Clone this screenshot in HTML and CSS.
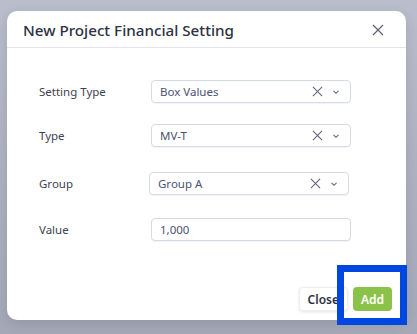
FILE: index.html
```html
<!DOCTYPE html>
<html lang="en">
<head>
    <meta charset="UTF-8">
    <meta name="viewport" content="width=device-width, initial-scale=1.0">
    <title>New Project Financial Setting</title>
    <link rel="stylesheet" href="styles.css">
</head>
<body>
    <div class="modal">
        <div class="modal-header">
            <h2 class="modal-title">New Project Financial Setting</h2>
            <span class="close">
                <svg width="12" height="12" viewBox="0 0 12 12"><path d="M1 1L11 11M11 1L1 11" stroke="#5b6070" stroke-width="1.2" fill="none"/></svg>
            </span>
        </div>

        <div class="modal-body">
            <div class="form-row">
                <label>Setting Type</label>
                <div class="select">
                    <span class="select-value">Box Values</span>
                    <svg class="clear" width="12" height="12" viewBox="0 0 12 12"><path d="M1 1L11 11M11 1L1 11" stroke="#5b6278" stroke-width="1.1" fill="none"/></svg>
                    <svg class="chevron" width="8" height="6" viewBox="0 0 8 6"><path d="M1.5 1.8L4 4.3L6.5 1.8" stroke="#5b6278" stroke-width="1.1" fill="none"/></svg>
                </div>
            </div>
            <div class="form-row">
                <label>Type</label>
                <div class="select">
                    <span class="select-value">MV-T</span>
                    <svg class="clear" width="12" height="12" viewBox="0 0 12 12"><path d="M1 1L11 11M11 1L1 11" stroke="#5b6278" stroke-width="1.1" fill="none"/></svg>
                    <svg class="chevron" width="8" height="6" viewBox="0 0 8 6"><path d="M1.5 1.8L4 4.3L6.5 1.8" stroke="#5b6278" stroke-width="1.1" fill="none"/></svg>
                </div>
            </div>
            <div class="form-row form-row-group">
                <label>Group</label>
                <div class="select">
                    <span class="select-value">Group A</span>
                    <svg class="clear" width="12" height="12" viewBox="0 0 12 12"><path d="M1 1L11 11M11 1L1 11" stroke="#5b6278" stroke-width="1.1" fill="none"/></svg>
                    <svg class="chevron" width="8" height="6" viewBox="0 0 8 6"><path d="M1.5 1.8L4 4.3L6.5 1.8" stroke="#5b6278" stroke-width="1.1" fill="none"/></svg>
                </div>
            </div>
            <div class="form-row form-row-value">
                <label>Value</label>
                <input class="text-input" value="1,000">
            </div>
        </div>

        <div class="modal-footer">
            <button class="btn btn-close">Close</button>
            <button class="btn btn-add">Add</button>
        </div>
    </div>

    <div class="highlight"></div>
</body>
</html>
```

FILE: styles.css
```css
body {
    font-family: "Noto Sans", "Open Sans", Arial, sans-serif;
    margin: 0;
    padding: 11px 11px 0 7px;
    background: linear-gradient(to bottom, #babdcb, #a4a8b7);
    min-height: 334px;
    box-sizing: border-box;
    position: relative;
    overflow: hidden;
}
.modal {
    background-color: white;
    border-radius: 10px;
    box-shadow: 0 4px 12px rgba(40, 45, 70, 0.15);
    width: 399px;
    height: 309px;
    display: flex;
    flex-direction: column;
}
.modal-header {
    display: flex;
    justify-content: space-between;
    align-items: center;
    height: 36px;
    padding: 0 22px 0 16px;
    border-bottom: 1px solid #e3e4ef;
}
.modal-title {
    font-size: 15.2px;
    font-weight: 500;
    color: #2d3142;
    margin: 0;
    padding-top: 2px;
}
.close {
    display: flex;
    cursor: pointer;
    padding-top: 1px;
}
.modal-body {
    flex-grow: 1;
    padding: 32px 0 0 32px;
    display: flex;
    flex-direction: column;
    gap: 21px;
}
.form-row {
    display: flex;
    align-items: center;
}
.form-row label {
    width: 112px;
    font-size: 11.5px;
    color: #3e4250;
}
.form-row-group {
    margin-top: 4px;
}
.form-row-group label {
    width: 110px;
}
.form-row-value {
    margin-top: 2px;
}
.select,
.text-input {
    width: 200px;
    height: 23px;
    box-sizing: border-box;
    border: 1px solid #d6d9e6;
    border-radius: 4px;
    display: flex;
    align-items: center;
    padding: 0 8px;
    font-family: inherit;
    font-size: 11.5px;
    color: #4a5273;
    box-shadow: 0 1px 1px rgba(60, 70, 110, 0.06);
}
.select-value {
    flex-grow: 1;
}
.select .clear {
    width: 11px;
    height: 11px;
    margin-right: 9px;
}
.select .chevron {
    margin-right: 2px;
}
.text-input {
    outline: none;
}
.modal-footer {
    display: flex;
    justify-content: flex-end;
    gap: 5px;
    padding: 0 14px 9px 0;
}
.btn {
    font-family: inherit;
    height: 24px;
    border-radius: 4px;
    font-size: 12px;
    font-weight: 600;
    cursor: pointer;
    padding: 0 8px;
}
.btn-close {
    background-color: white;
    color: #2d3142;
    border: 1px solid #eceef4;
    box-shadow: 0 1px 3px rgba(40, 45, 70, 0.12);
}
.btn-add {
    background-color: #8bc34a;
    color: white;
    border: none;
    width: 39px;
}
.highlight {
    position: absolute;
    left: 337px;
    top: 265px;
    width: 70px;
    height: 60px;
    box-sizing: border-box;
    border: 7px solid #0047e0;
}
```
